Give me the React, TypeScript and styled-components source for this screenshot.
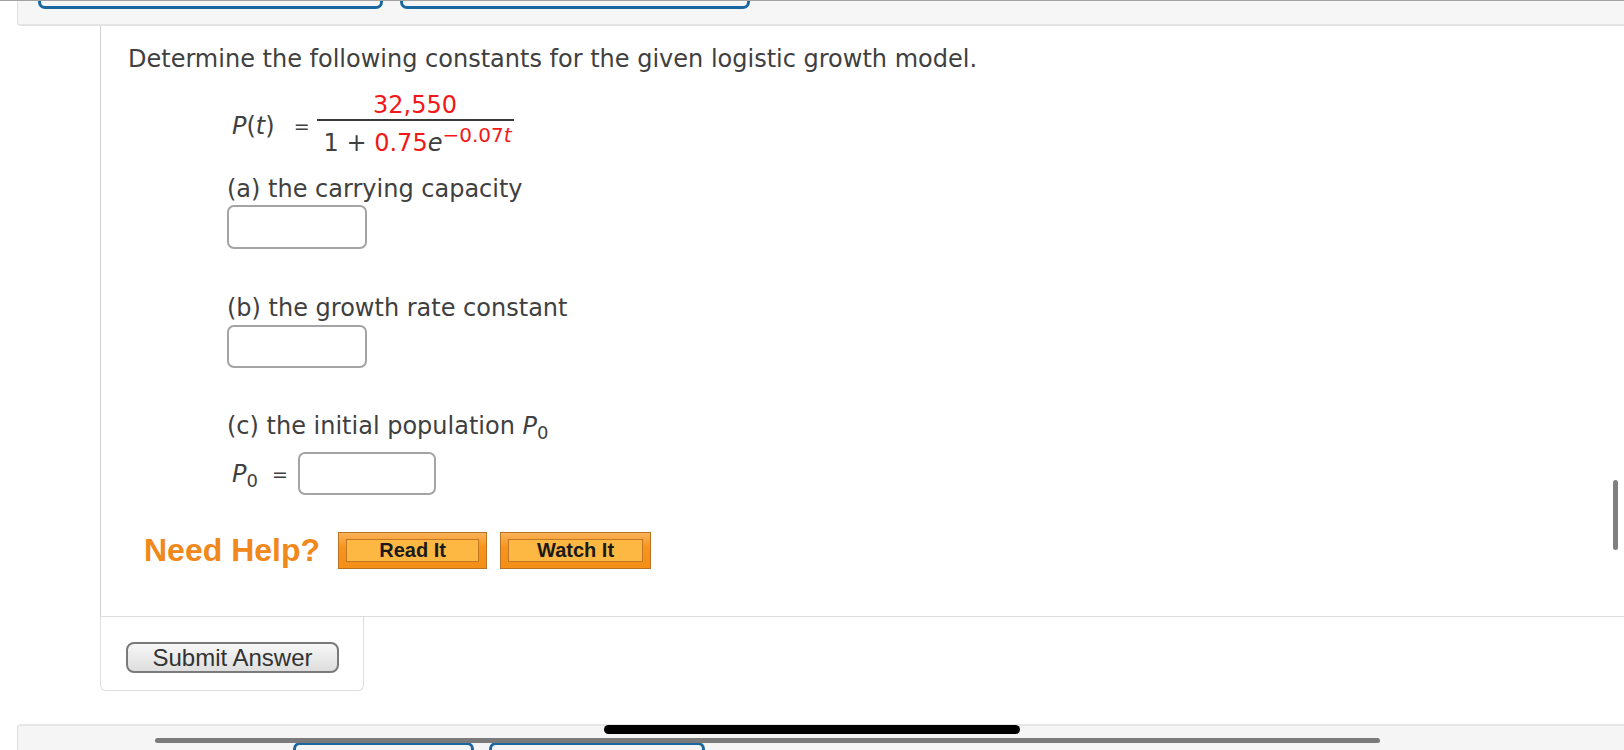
import React from 'react';
import styled, {createGlobalStyle} from "styled-components";

const GlobalStyle = createGlobalStyle`
  html, body {
    margin: 0;
    padding: 0;
    background: #ffffff;
    overflow: hidden;
  }
  body {
    font-family: "DejaVu Sans", Verdana, sans-serif;
    color: #404040;
  }
`

const Page = styled.div`
  position: relative;
  width: 1624px;
  height: 750px;
  overflow: hidden;
  border-top: 1px solid #a2a2a2;
  box-sizing: border-box;
`

const TopBand = styled.div`
  margin-left: 17px;
  height: 25px;
  box-sizing: border-box;
  background: #f6f6f6;
  border-left: 1px solid #dedede;
  border-bottom: 2px solid #e3e3e3;
  border-bottom-left-radius: 4px;
  display: flex;
  gap: 17px;
  padding-left: 20px;
`

const TopTab = styled.div<{ $w: number }>`
  width: ${p => p.$w}px;
  height: 8px;
  box-sizing: border-box;
  border: 3px solid #1b679f;
  border-top: none;
  border-radius: 0 0 7px 7px;
`

const Panel = styled.div`
  margin-left: 100px;
  height: 591px;
  box-sizing: border-box;
  border-left: 1px solid #d2d2d2;
  border-bottom: 1px solid #dcdcdc;
  padding: 18px 0 0 27px;
`

const Title = styled.div`
  font-size: 24px;
  line-height: 30px;
`

const FormulaRow = styled.div`
  display: flex;
  align-items: center;
  margin: 17px 0 0 104px;
  font-size: 24px;
`

const Var = styled.span`
  font-style: italic;
`

const Eq = styled.span<{ $l: number; $r: number }>`
  font-size: 19px;
  margin: 0 ${p => p.$r}px 0 ${p => p.$l}px;
`

const Fraction = styled.div`
  display: inline-flex;
  flex-direction: column;
  align-items: center;
`

const Numerator = styled.div`
  line-height: 28px;
  color: #f01818;
`

const Denominator = styled.div`
  border-top: 2px solid #3a3a3a;
  padding: 4px 2px 0 7px;
  line-height: 36px;
  white-space: nowrap;
`

const Red = styled.span`
  color: #f01818;
`

const Sup = styled.sup`
  font-size: 20px;
  color: #f01818;
  vertical-align: 9px;
  line-height: 0;
`

const Sub = styled.sub`
  font-size: 18px;
  font-style: normal;
  vertical-align: -5px;
  line-height: 0;
`

const Part = styled.div<{ $top: number }>`
  margin: ${p => p.$top}px 0 0 99px;
  font-size: 24px;
  line-height: 30px;
`

const AnswerBox = styled.div<{ $top: number; $w: number; $h: number }>`
  margin: ${p => p.$top}px 0 0 99px;
  width: ${p => p.$w}px;
  height: ${p => p.$h}px;
  box-sizing: border-box;
  border: 2px solid #a4a4a4;
  border-radius: 7px;
  background: #fff;
`

const InlineRow = styled.div`
  display: flex;
  align-items: center;
  margin: 11px 0 0 104px;
  font-size: 24px;
`

const InlineBox = styled.div`
  width: 138px;
  height: 43px;
  box-sizing: border-box;
  border: 2px solid #a4a4a4;
  border-radius: 7px;
`

const HelpRow = styled.div`
  display: flex;
  align-items: center;
  margin: 37px 0 0 16px;
  height: 37px;
`

const HelpLabel = styled.span`
  font-family: "Liberation Sans", Arial, sans-serif;
  font-weight: bold;
  font-size: 32px;
  color: #f0881b;
  margin-right: 18px;
`

const HelpButton = styled.div<{ $w: number }>`
  width: ${p => p.$w}px;
  height: 37px;
  box-sizing: border-box;
  margin-right: 13px;
  border: 1px solid #b9721f;
  background: linear-gradient(#fbb35a, #f7941d 40%, #f48f17);
  padding: 6px 7px;
`

const HelpInner = styled.div`
  height: 100%;
  box-sizing: border-box;
  border: 1px solid #c27722;
  background: #fdb844;
  display: flex;
  align-items: center;
  justify-content: center;
  font-family: "Liberation Sans", Arial, sans-serif;
  font-weight: bold;
  font-size: 20px;
  color: #1a1a1a;
`

const SubmitBox = styled.div`
  margin-left: 100px;
  width: 264px;
  height: 74px;
  box-sizing: border-box;
  border: 1px solid #dedede;
  border-top: none;
  border-radius: 0 0 6px 6px;
  padding: 25px 0 0 25px;
`

const SubmitButton = styled.div`
  width: 213px;
  height: 31px;
  box-sizing: border-box;
  border: 2px solid #7a7a7a;
  border-radius: 8px;
  background: linear-gradient(#f7f7f7, #dedede);
  display: flex;
  align-items: center;
  justify-content: center;
  font-family: "Liberation Sans", Arial, sans-serif;
  font-size: 24px;
  color: #333;
`

const BottomBand = styled.div`
  margin: 33px 0 0 17px;
  height: 40px;
  box-sizing: border-box;
  background: #f5f5f5;
  border-top: 2px solid #e6e6e6;
  border-left: 1px solid #dedede;
  border-top-left-radius: 4px;
  display: flex;
  gap: 15px;
  padding: 16px 0 0 275px;
`

const BottomTab = styled.div<{ $w: number }>`
  width: ${p => p.$w}px;
  height: 30px;
  box-sizing: border-box;
  border: 3px solid #1b679f;
  border-bottom: none;
  border-radius: 7px 7px 0 0;
`

const HomeIndicator = styled.div`
  position: absolute;
  left: 604px;
  top: 724px;
  width: 416px;
  height: 9px;
  border-radius: 5px;
  background: #000;
`

const HScroll = styled.div`
  position: absolute;
  left: 155px;
  top: 737px;
  width: 1225px;
  height: 5px;
  border-radius: 3px;
  background: #7b7b7b;
`

const VScroll = styled.div`
  position: absolute;
  left: 1613px;
  top: 479px;
  width: 5px;
  height: 70px;
  border-radius: 3px;
  background: #808080;
`

export default function App() {
    return (
        <Page>
            <GlobalStyle/>
            <TopBand>
                <TopTab $w={345}/>
                <TopTab $w={350}/>
            </TopBand>
            <Panel>
                <Title>Determine the following constants for the given logistic growth model.</Title>
                <FormulaRow>
                    <span><Var>P</Var>(<Var>t</Var>)</span>
                    <Eq $l={19} $r={7}>=</Eq>
                    <Fraction>
                        <Numerator>32,550</Numerator>
                        <Denominator>
                            1 + <Red>0.75</Red><Var>e</Var><Sup>−0.07<Var>t</Var></Sup>
                        </Denominator>
                    </Fraction>
                </FormulaRow>
                <Part $top={13}>(a) the carrying capacity</Part>
                <AnswerBox $top={1} $w={140} $h={44}/>
                <Part $top={44}>(b) the growth rate constant</Part>
                <AnswerBox $top={2} $w={140} $h={43}/>
                <Part $top={43}>(c) the initial population <Var>P<Sub>0</Sub></Var></Part>
                <InlineRow>
                    <Var>P<Sub>0</Sub></Var>
                    <Eq $l={14} $r={10}>=</Eq>
                    <InlineBox/>
                </InlineRow>
                <HelpRow>
                    <HelpLabel>Need Help?</HelpLabel>
                    <HelpButton $w={149}><HelpInner>Read It</HelpInner></HelpButton>
                    <HelpButton $w={151}><HelpInner>Watch It</HelpInner></HelpButton>
                </HelpRow>
            </Panel>
            <SubmitBox>
                <SubmitButton>Submit Answer</SubmitButton>
            </SubmitBox>
            <BottomBand>
                <BottomTab $w={181}/>
                <BottomTab $w={216}/>
            </BottomBand>
            <HomeIndicator/>
            <HScroll/>
            <VScroll/>
        </Page>
    );
}
